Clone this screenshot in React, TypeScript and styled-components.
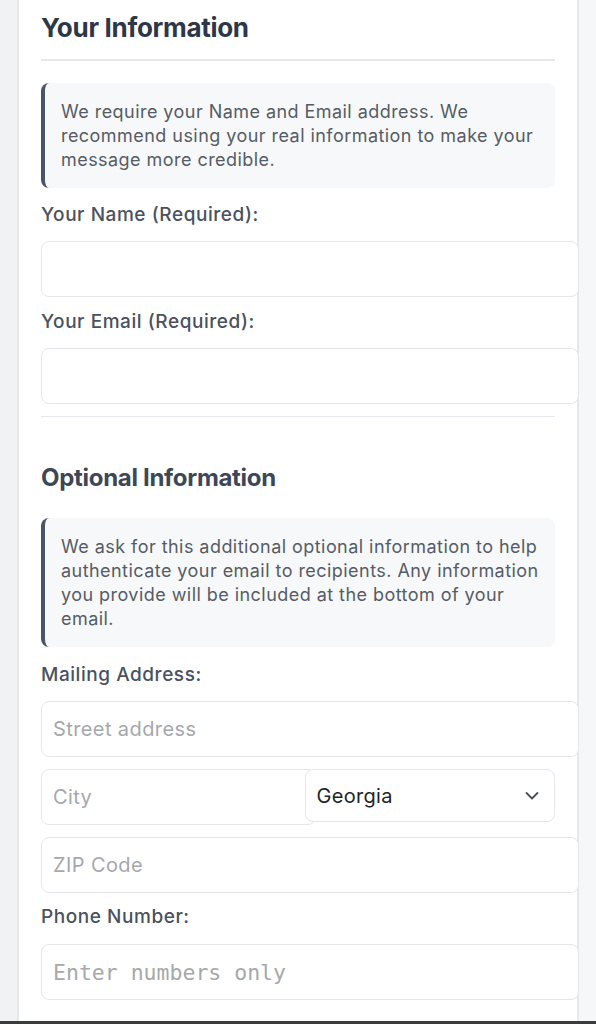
import React from "react";
import styled, { createGlobalStyle } from "styled-components";

const Global = createGlobalStyle`
  html, body { margin: 0; padding: 0; background: #f3f4f6; overflow: hidden; }
  body { font-family: Inter, "Noto Sans", sans-serif; }
  * { -webkit-font-smoothing: antialiased; }
`;

const Page = styled.div`
  min-height: 1024px;
  display: flex;
  flex-direction: column;
  background: linear-gradient(to right, #f1f2f4 50%, #f6f7f8 50%);
`;

const Card = styled.main`
  flex: 1;
  margin: 0 17px;
  background: #ffffff;
  border-left: 2px solid #e6e8ec;
  border-right: 2px solid #e6e8ec;
  padding: 12px 22px 0 22px;
  display: flex;
  flex-direction: column;
`;

const BottomBar = styled.div`
  height: 3px;
  background: #3a3b3d;
`;

const SectionTitle = styled.h2`
  margin: 0;
  font-size: 26px;
  line-height: 32px;
  font-weight: 700;
  color: #2d3748;
  letter-spacing: -0.3px;
  padding-bottom: 15px;
  border-bottom: 2px solid #e5e8ed;
`;

const SubTitle = styled.h3`
  margin: 46px 0 0 0;
  font-size: 24px;
  line-height: 30px;
  font-weight: 700;
  color: #3d4756;
  letter-spacing: -0.3px;
`;

const Notice = styled.div<{ $top: number }>`
  margin-top: ${(p) => p.$top}px;
  background: #f7f8fa;
  border-left: 4px solid #4a5568;
  border-radius: 8px;
  padding: 17px 16px 16px 16px;
  font-size: 18px;
  line-height: 24px;
  letter-spacing: 0.45px;
  color: #565c65;
`;

const Label = styled.label<{ $top: number; $gap?: number }>`
  display: block;
  margin-top: ${(p) => p.$top}px;
  margin-bottom: ${(p) => p.$gap ?? 14}px;
  font-size: 19px;
  line-height: 24px;
  font-weight: 500;
  letter-spacing: 0.55px;
  color: #4a5160;
`;

const TextInput = styled.input<{ $top?: number; $mono?: boolean }>`
  display: block;
  box-sizing: content-box;
  width: 100%;
  height: 54px;
  margin: ${(p) => p.$top ?? 0}px 0 0 0;
  padding: 0 11px;
  border: 1px solid #e3e7ec;
  border-radius: 8px;
  background: #ffffff;
  font-family: ${(p) => (p.$mono ? `"DejaVu Sans Mono", monospace` : `Inter, "Noto Sans", sans-serif`)};
  font-size: ${(p) => (p.$mono ? "21.5px" : "20px")};
  letter-spacing: ${(p) => (p.$mono ? "0" : "0.4px")};
  color: #1f2937;
  outline: none;
  &::placeholder {
    color: #a6a8ab;
  }
`;

const Divider = styled.hr`
  margin: 12px 0 0 0;
  border: none;
  border-top: 1px solid #e5e8ed;
  height: 0;
`;

const Row = styled.div`
  display: grid;
  grid-template-columns: 1fr 1fr;
  column-gap: 13px;
  align-items: start;
  margin-top: 12px;
`;

const SelectWrap = styled.div`
  position: relative;
`;

const Select = styled.select`
  display: block;
  width: 100%;
  box-sizing: border-box;
  height: 53px;
  appearance: none;
  -webkit-appearance: none;
  padding: 0 40px 0 11px;
  border: 1px solid #e3e7ec;
  border-radius: 8px;
  background: #ffffff;
  font-family: Inter, "Noto Sans", sans-serif;
  font-size: 20px;
  letter-spacing: 0.3px;
  color: #1f2329;
  outline: none;
`;

const Chevron = styled.svg`
  position: absolute;
  right: 16px;
  top: 50%;
  transform: translateY(-50%);
  pointer-events: none;
`;

export default function App() {
  return (
    <Page>
      <Global />
      <Card>
        <SectionTitle>Your Information</SectionTitle>
        <Notice $top={22}>
          We require your Name and Email address. We recommend using your real
          information to make your message more credible.
        </Notice>

        <Label $top={15} htmlFor="name">Your Name (Required):</Label>
        <TextInput id="name" type="text" />

        <Label $top={13} htmlFor="email">Your Email (Required):</Label>
        <TextInput id="email" type="email" />

        <Divider />

        <SubTitle>Optional Information</SubTitle>
        <Notice $top={25}>
          We ask for this additional optional information to help authenticate
          your email to recipients. Any information you provide will be
          included at the bottom of your email.
        </Notice>

        <Label $top={16} htmlFor="street">Mailing Address:</Label>
        <TextInput id="street" type="text" placeholder="Street address" />
        <Row>
          <TextInput type="text" placeholder="City" />
          <SelectWrap>
            <Select defaultValue="GA">
              <option value="GA">Georgia</option>
            </Select>
            <Chevron width="14" height="9" viewBox="0 0 14 9" fill="none">
              <path d="M1.5 1.5 L7 7 L12.5 1.5" stroke="#4b5058" strokeWidth="1.8" strokeLinecap="round" strokeLinejoin="round" />
            </Chevron>
          </SelectWrap>
        </Row>
        <TextInput $top={12} type="text" placeholder="ZIP Code" />

        <Label $top={12} $gap={15} htmlFor="phone">Phone Number:</Label>
        <TextInput id="phone" $mono type="tel" placeholder="Enter numbers only" />
      </Card>
      <BottomBar />
    </Page>
  );
}
